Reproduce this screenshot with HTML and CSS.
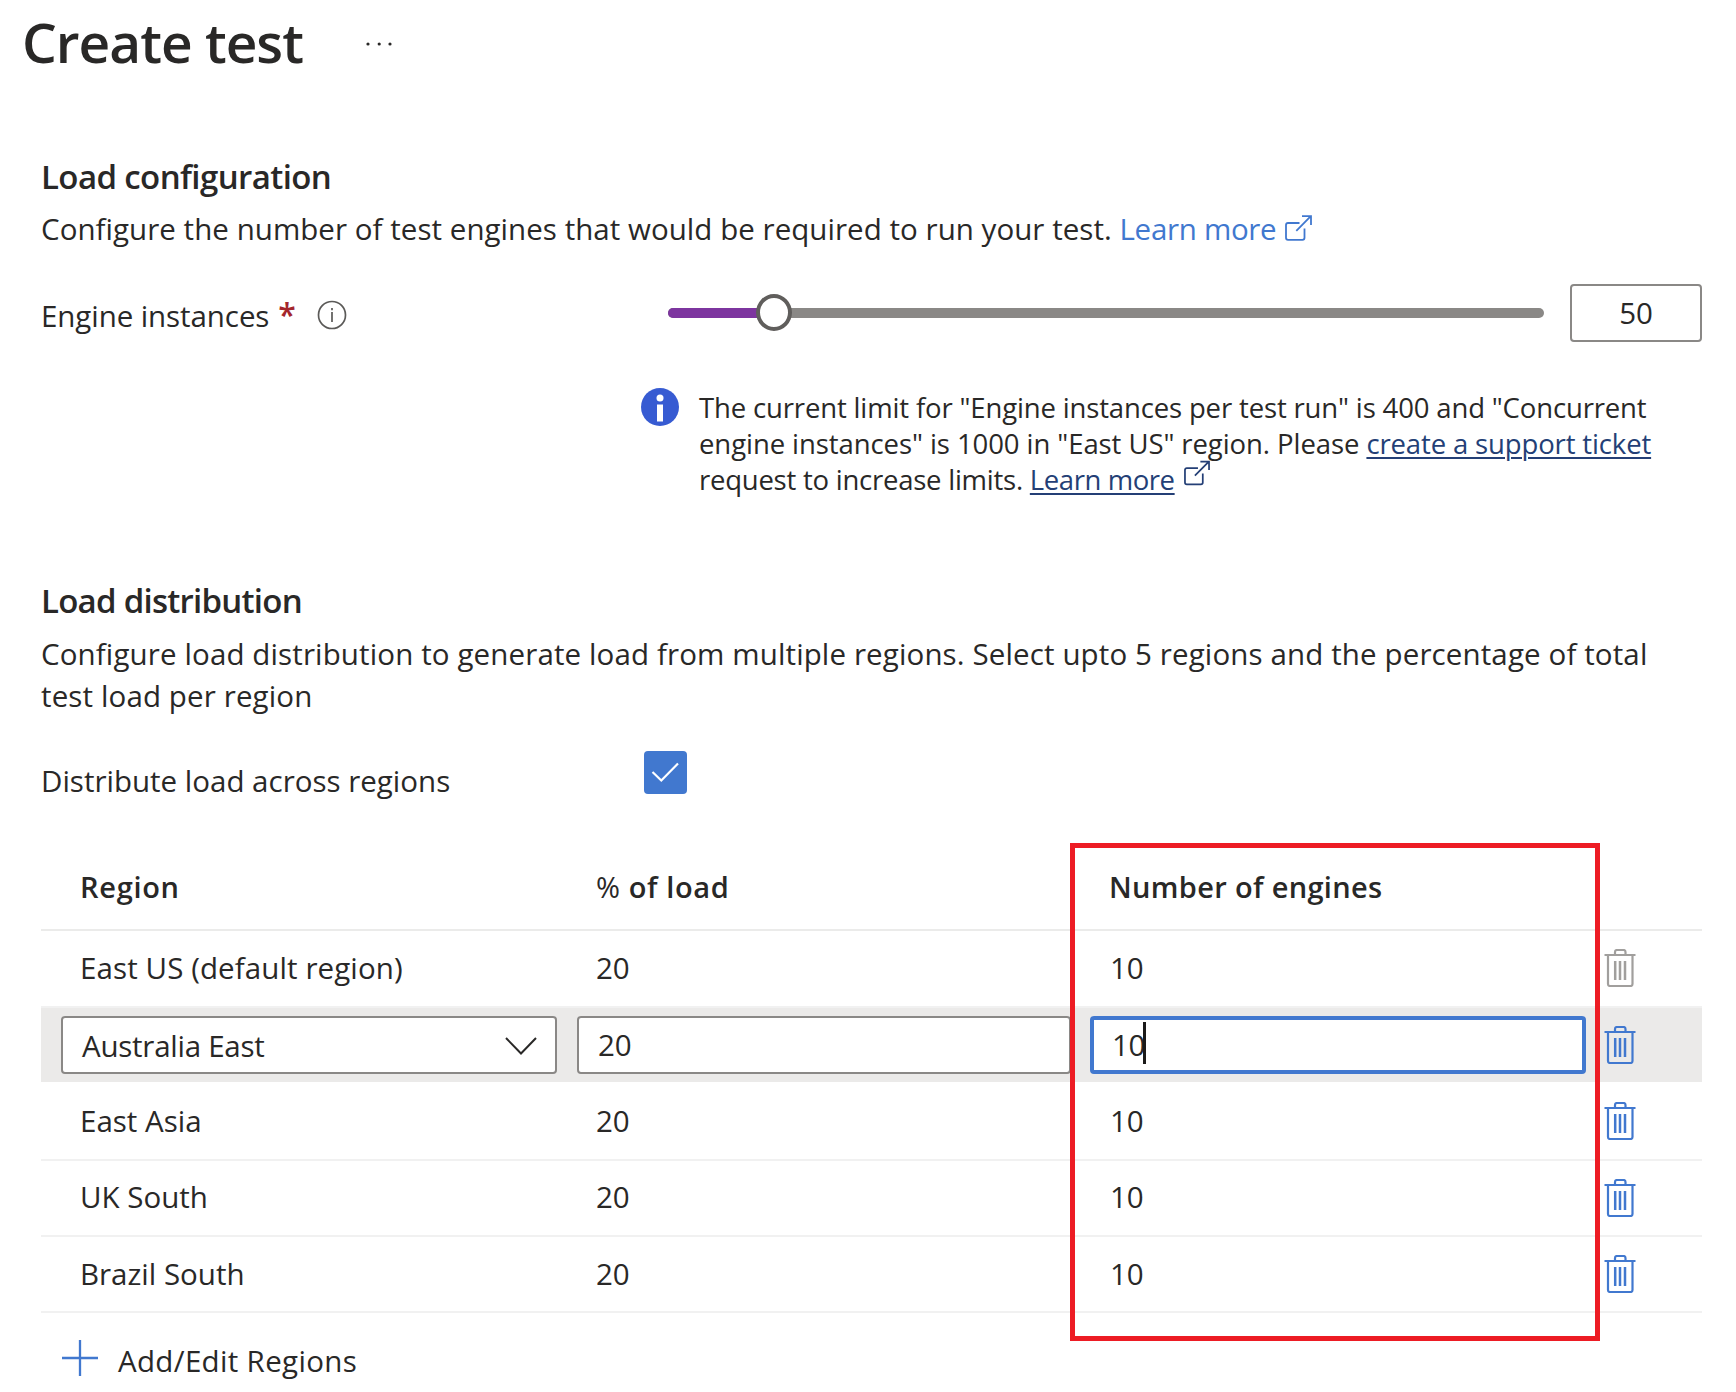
FILE: index.html
```
<!DOCTYPE html>
<html lang="en">
<head>
<meta charset="utf-8">
<title>Create test</title>
<link rel="stylesheet" href="styles.css">
</head>
<body>
<svg class="sprite" aria-hidden="true">
  <symbol id="external" viewBox="0 0 27 26">
    <path d="M14.5 8H3Q1 8 1 10V22.8Q1 24.8 3 24.8H17.5Q19.5 24.8 19.5 22.8V13.5M11.3 15.8L25.8 1.2M17 1.1H26V10" fill="none" stroke="currentColor" stroke-width="1.8"/>
  </symbol>
  <symbol id="trash" viewBox="0 0 32 38">
    <path d="M.5 6H31.5M11 5.500V3Q11 1 13 1H19.500Q21.500 1 21.500 3V5.500M4 6V35Q4 37 6 37H26.500Q28.500 37 28.500 35V6" fill="none" stroke="currentColor" stroke-width="2.200"/>
    <path d="M11.200 12V31M16 12V31M21 12V31" fill="none" stroke="currentColor" stroke-width="2.500"/>
  </symbol>
</svg>
<header class="title-bar">
  <h1 class="title">Create test</h1>
  <svg class="more" viewBox="0 0 26 4"><circle cx="2" cy="2" r="1.600"/><circle cx="13.200" cy="2" r="1.600"/><circle cx="24" cy="2" r="1.600"/></svg>
</header>
<main class="content">
  <h2 class="heading">Load configuration</h2>
  <p class="description">Configure the number of test engines that would be required to run your test. <a class="link">Learn more<svg class="link-icon"><use href="#external"/></svg></a></p>

  <div class="engine-row">
    <div class="engine-label"><span>Engine instances</span><span class="required">*</span>
      <svg class="hint" viewBox="0 0 30 30"><circle cx="15" cy="15" r="13.500" fill="none" stroke="#5b5a58" stroke-width="1.700"/><path d="M15 12V22M15 8V10.200" stroke="#5b5a58" stroke-width="1.700"/></svg>
    </div>
    <div class="slider"><div class="slider-fill"></div><div class="slider-thumb"></div></div>
    <div class="box engine-count">50</div>
  </div>

  <div class="notice">
    <svg class="notice-icon" viewBox="0 0 38 38"><circle cx="19" cy="19" r="19" fill="#375bd2"/><circle cx="19" cy="10" r="3.500" fill="#fff"/><path d="M16 16.500H22V33.500H16Z" fill="#fff"/></svg>
    <div class="notice-text">
      <div class="line line-a">The current limit for "Engine instances per test run" is 400 and "Concurrent</div>
      <div class="line line-b">engine instances" is 1000 in "East US" region. Please <a class="notice-link ticket">create a support ticket</a></div>
      <div class="line line-c">request to increase limits. <a class="notice-link">Learn more</a><svg class="notice-link-icon"><use href="#external"/></svg></div>
    </div>
  </div>

  <h2 class="heading heading-distribution">Load distribution</h2>
  <p class="description distribution">Configure load distribution to generate load from multiple regions. Select upto 5 regions and the percentage of total<br>test load per region</p>

  <div class="check-row">
    <span class="check-label">Distribute load across regions</span>
    <span class="checkbox"><svg class="check" viewBox="0 0 43 43"><path d="M8.500 21L17.300 29.500L34 12.500" fill="none" stroke="#fff" stroke-width="2.200"/></svg></span>
  </div>

  <div class="table">
    <div class="row head"><span class="th-region">Region</span><span class="th-load"><span class="percent">%</span> of load</span><span class="th-engines">Number of engines</span></div>
    <div class="row first"><span class="wide">East US (default region)</span><span>20</span><span>10</span><svg class="trash disabled"><use href="#trash"/></svg></div>
    <div class="row editing">
      <div class="box select"><span>Australia East</span><svg class="chevron" viewBox="0 0 32 18"><path d="M1 1L16 16.500L31 1" fill="none" stroke="#292827" stroke-width="2"/></svg></div>
      <div class="box load">20</div>
      <div class="box focused">10<span class="caret"></span></div>
      <svg class="trash"><use href="#trash"/></svg>
    </div>
    <div class="row third"><span>East Asia</span><span>20</span><span>10</span><svg class="trash"><use href="#trash"/></svg></div>
    <div class="row fourth"><span>UK South</span><span>20</span><span>10</span><svg class="trash"><use href="#trash"/></svg></div>
    <div class="row"><span>Brazil South</span><span>20</span><span>10</span><svg class="trash"><use href="#trash"/></svg></div>
    <div class="callout"></div>
  </div>
  <div class="add"><svg class="plus" viewBox="0 0 36 36"><path d="M0 18H36M18 0V36" stroke="#4178cf" stroke-width="2.300"/></svg><span>Add/Edit Regions</span></div>
</main>
</body>
</html>
```
FILE: styles.css
```
* { box-sizing: border-box; }
body {
  margin: 0;
  height: 1392px;
  overflow: hidden;
  background: #fff;
  color: #292827;
  font: 29.5px/42px "Open Sans", "Noto Sans", sans-serif;
}
svg { display: block; flex: none; }
.sprite { position: absolute; width: 0; height: 0; }
.title-bar { display: flex; height: 84px; padding-left: 22px; }
.title { width: 344px; margin: 0; font-size: 55px; line-height: 84px; font-weight: 600; letter-spacing: -1px; }
.more { width: 26px; height: 4px; margin-top: 42px; fill: #292827; }
.content { width: 1661px; margin-left: 41px; padding-top: 71px; }
.heading { margin: 0; font-size: 33px; line-height: 44px; font-weight: 600; letter-spacing: -0.6px; }
.description { margin: 9px 0 0; white-space: nowrap; letter-spacing: 0.044px; }
.link { color: #4178cf; letter-spacing: -0.3px; }
.link-icon { display: inline-block; width: 27px; height: 26px; margin-left: 9px; vertical-align: -1px; }

.engine-row { display: flex; height: 58px; margin-top: 34px; }
.engine-label { display: flex; width: 627px; padding: 11px 0 0 0; letter-spacing: -0.08px; }
.required { margin-left: 9px; color: #a4262c; font-size: 32px; font-weight: 600; line-height: 40px; }
.hint { width: 30px; height: 30px; margin: 5px 0 0 21px; }
.slider { position: relative; width: 876px; height: 10px; margin-top: 24px; border-radius: 5px; background: #8a8886; }
.slider-fill { width: 106px; height: 10px; border-radius: 5px 0 0 5px; background: #7d359f; }
.slider-thumb { position: absolute; left: 88px; top: -14px; width: 36px; height: 37px; border: 4px solid #605e5c; border-radius: 50%; background: #fff; }
.box { height: 58px; border: 2px solid #8a8886; border-radius: 4px; background: #fff; line-height: 54px; }
.engine-count { width: 132px; margin-left: 26px; text-align: center; }

.notice { display: flex; margin: 46px 0 0 600px; gap: 20px; }
.notice-icon { width: 38px; height: 38px; }
.notice-text { padding-top: 2px; font-size: 27.5px; line-height: 36px; white-space: nowrap; }
.line { height: 36px; }
.line-a { letter-spacing: -0.15px; }
.line-b { letter-spacing: -0.076px; }
.ticket { letter-spacing: -0.14px; }
.line-c { display: flex; white-space: pre; letter-spacing: -0.24px; }
.line-c .notice-link { letter-spacing: -0.42px; }
.notice-link { color: #243f76; text-decoration: underline; text-decoration-thickness: 2px; text-underline-offset: 3px; }
.notice-link-icon { width: 26px; height: 26px; margin: -2px 0 0 9px; color: #243f76; }

.heading-distribution { margin-top: 81px; letter-spacing: -0.74px; }
.distribution { margin-top: 10px; line-height: 41.5px; letter-spacing: 0.125px; }
.check-row { display: flex; height: 92px; margin-top: 35px; }
.check-label { width: 603px; padding-top: 9px; }
.checkbox { width: 43px; height: 43px; border-radius: 4px; background: #4178cf; }
.check { width: 43px; height: 43px; }

.table { position: relative; }
.row { display: grid; grid-template-columns: 516px 514px 494px 32px; align-items: center; height: 76px; padding-left: 39px; border-bottom: 2px solid #f1f1f1; }
.head { height: 88px; align-items: start; padding-top: 23px; border-color: #ebebea; font-size: 29px; font-weight: 600; }
.th-region { letter-spacing: 0.7px; }
.th-load { letter-spacing: 0.6px; }
.th-engines { letter-spacing: 0.33px; margin-left: -1px; }
.percent { display: inline-block; font-weight: 400; }
.first { height: 77px; padding-bottom: 2px; }
.wide { letter-spacing: 0.1px; }
.trash { width: 32px; height: 38px; color: #4178cf; }
.disabled { color: #a19f9d; }
.editing { grid-template-columns: 496px 494px 497px 32px; column-gap: 20px; height: 74px; padding-left: 20px; border: 0; background: #ebeae9; }
.editing .focused { margin-left: -1px; margin-right: 2px; }
.editing .trash { margin-left: -4px; }
.select { display: flex; justify-content: space-between; padding: 0 18px 0 19px; line-height: 56px; letter-spacing: -0.25px; }
.chevron { width: 32px; height: 18px; margin-top: 19px; }
.load { padding-left: 19px; }
.focused { display: flex; padding-left: 18px; border: 4px solid #4178cf; line-height: 50px; letter-spacing: -0.3px; }
.caret { width: 3px; height: 42px; margin: 2px 0 0 -2px; background: #1b1a19; }
.third { height: 79px; }
.fourth span { margin-top: -2px; }
.callout { position: absolute; left: 1029px; top: 0; width: 530px; height: 498px; border: 5px solid #ed1c24; }
.add { display: flex; margin: 27px 0 0 21px; letter-spacing: 0.33px; }
.plus { width: 36px; height: 36px; margin-right: 20px; }
```
